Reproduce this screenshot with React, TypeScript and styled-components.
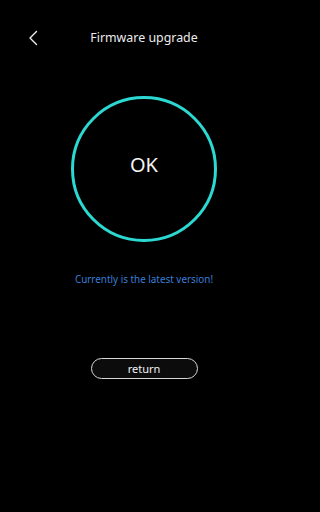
import styled, { createGlobalStyle } from 'styled-components';

const GlobalStyle = createGlobalStyle`
  html, body {
    margin: 0;
    padding: 0;
    background: #000;
  }
  body {
    font-family: 'Noto Sans', 'Open Sans', sans-serif;
  }
`;

const Screen = styled.div`
  width: 288px;
  height: 512px;
  background: #000;
  display: flex;
  flex-direction: column;
  align-items: center;
  overflow: hidden;
`;

const Header = styled.div`
  position: relative;
  width: 100%;
  height: 18px;
  margin-top: 29px;
  display: flex;
  align-items: center;
  justify-content: center;
`;

const BackButton = styled.button`
  position: absolute;
  left: 26px;
  top: 1px;
  width: 16px;
  height: 16px;
  padding: 0;
  border: 0;
  background: none;
  display: flex;
  align-items: center;
  justify-content: center;
  cursor: pointer;
`;

const Title = styled.h1`
  margin: 0;
  font-size: 12.4px;
  line-height: 18px;
  font-weight: 400;
  color: #ececec;
`;

const StatusRing = styled.div`
  box-sizing: border-box;
  width: 146px;
  height: 146px;
  margin-top: 49px;
  border: 3px solid #2bd8d2;
  border-radius: 50%;
  display: flex;
  align-items: center;
  justify-content: center;
  padding-bottom: 9px;
`;

const RingLabel = styled.span`
  font-size: 20px;
  color: #f4f4f4;
`;

const Message = styled.p`
  margin: 30px 0 0;
  font-size: 9.9px;
  line-height: 14px;
  color: #3a7fd8;
`;

const ReturnButton = styled.button`
  box-sizing: border-box;
  width: 107px;
  height: 21px;
  margin-top: 72px;
  padding: 0;
  border: 1.5px solid #d8d8d8;
  border-radius: 11px;
  background: #0c0c0c;
  color: #f2f2f2;
  font-family: inherit;
  font-size: 11px;
  line-height: 16px;
  cursor: pointer;
`;

export default function App() {
  return (
    <>
      <GlobalStyle />
      <Screen>
        <Header>
          <BackButton aria-label='back'>
            <svg width='16' height='16' viewBox='0 0 16 16' fill='none'>
              <polyline
                points='10.5,1.5 4,8 10.5,14.5'
                stroke='#f0f0f0'
                strokeWidth='1.4'
                strokeLinecap='round'
                strokeLinejoin='round'
              />
            </svg>
          </BackButton>
          <Title>Firmware upgrade</Title>
        </Header>
        <StatusRing>
          <RingLabel>OK</RingLabel>
        </StatusRing>
        <Message>Currently is the latest version!</Message>
        <ReturnButton>return</ReturnButton>
      </Screen>
    </>
  );
}
